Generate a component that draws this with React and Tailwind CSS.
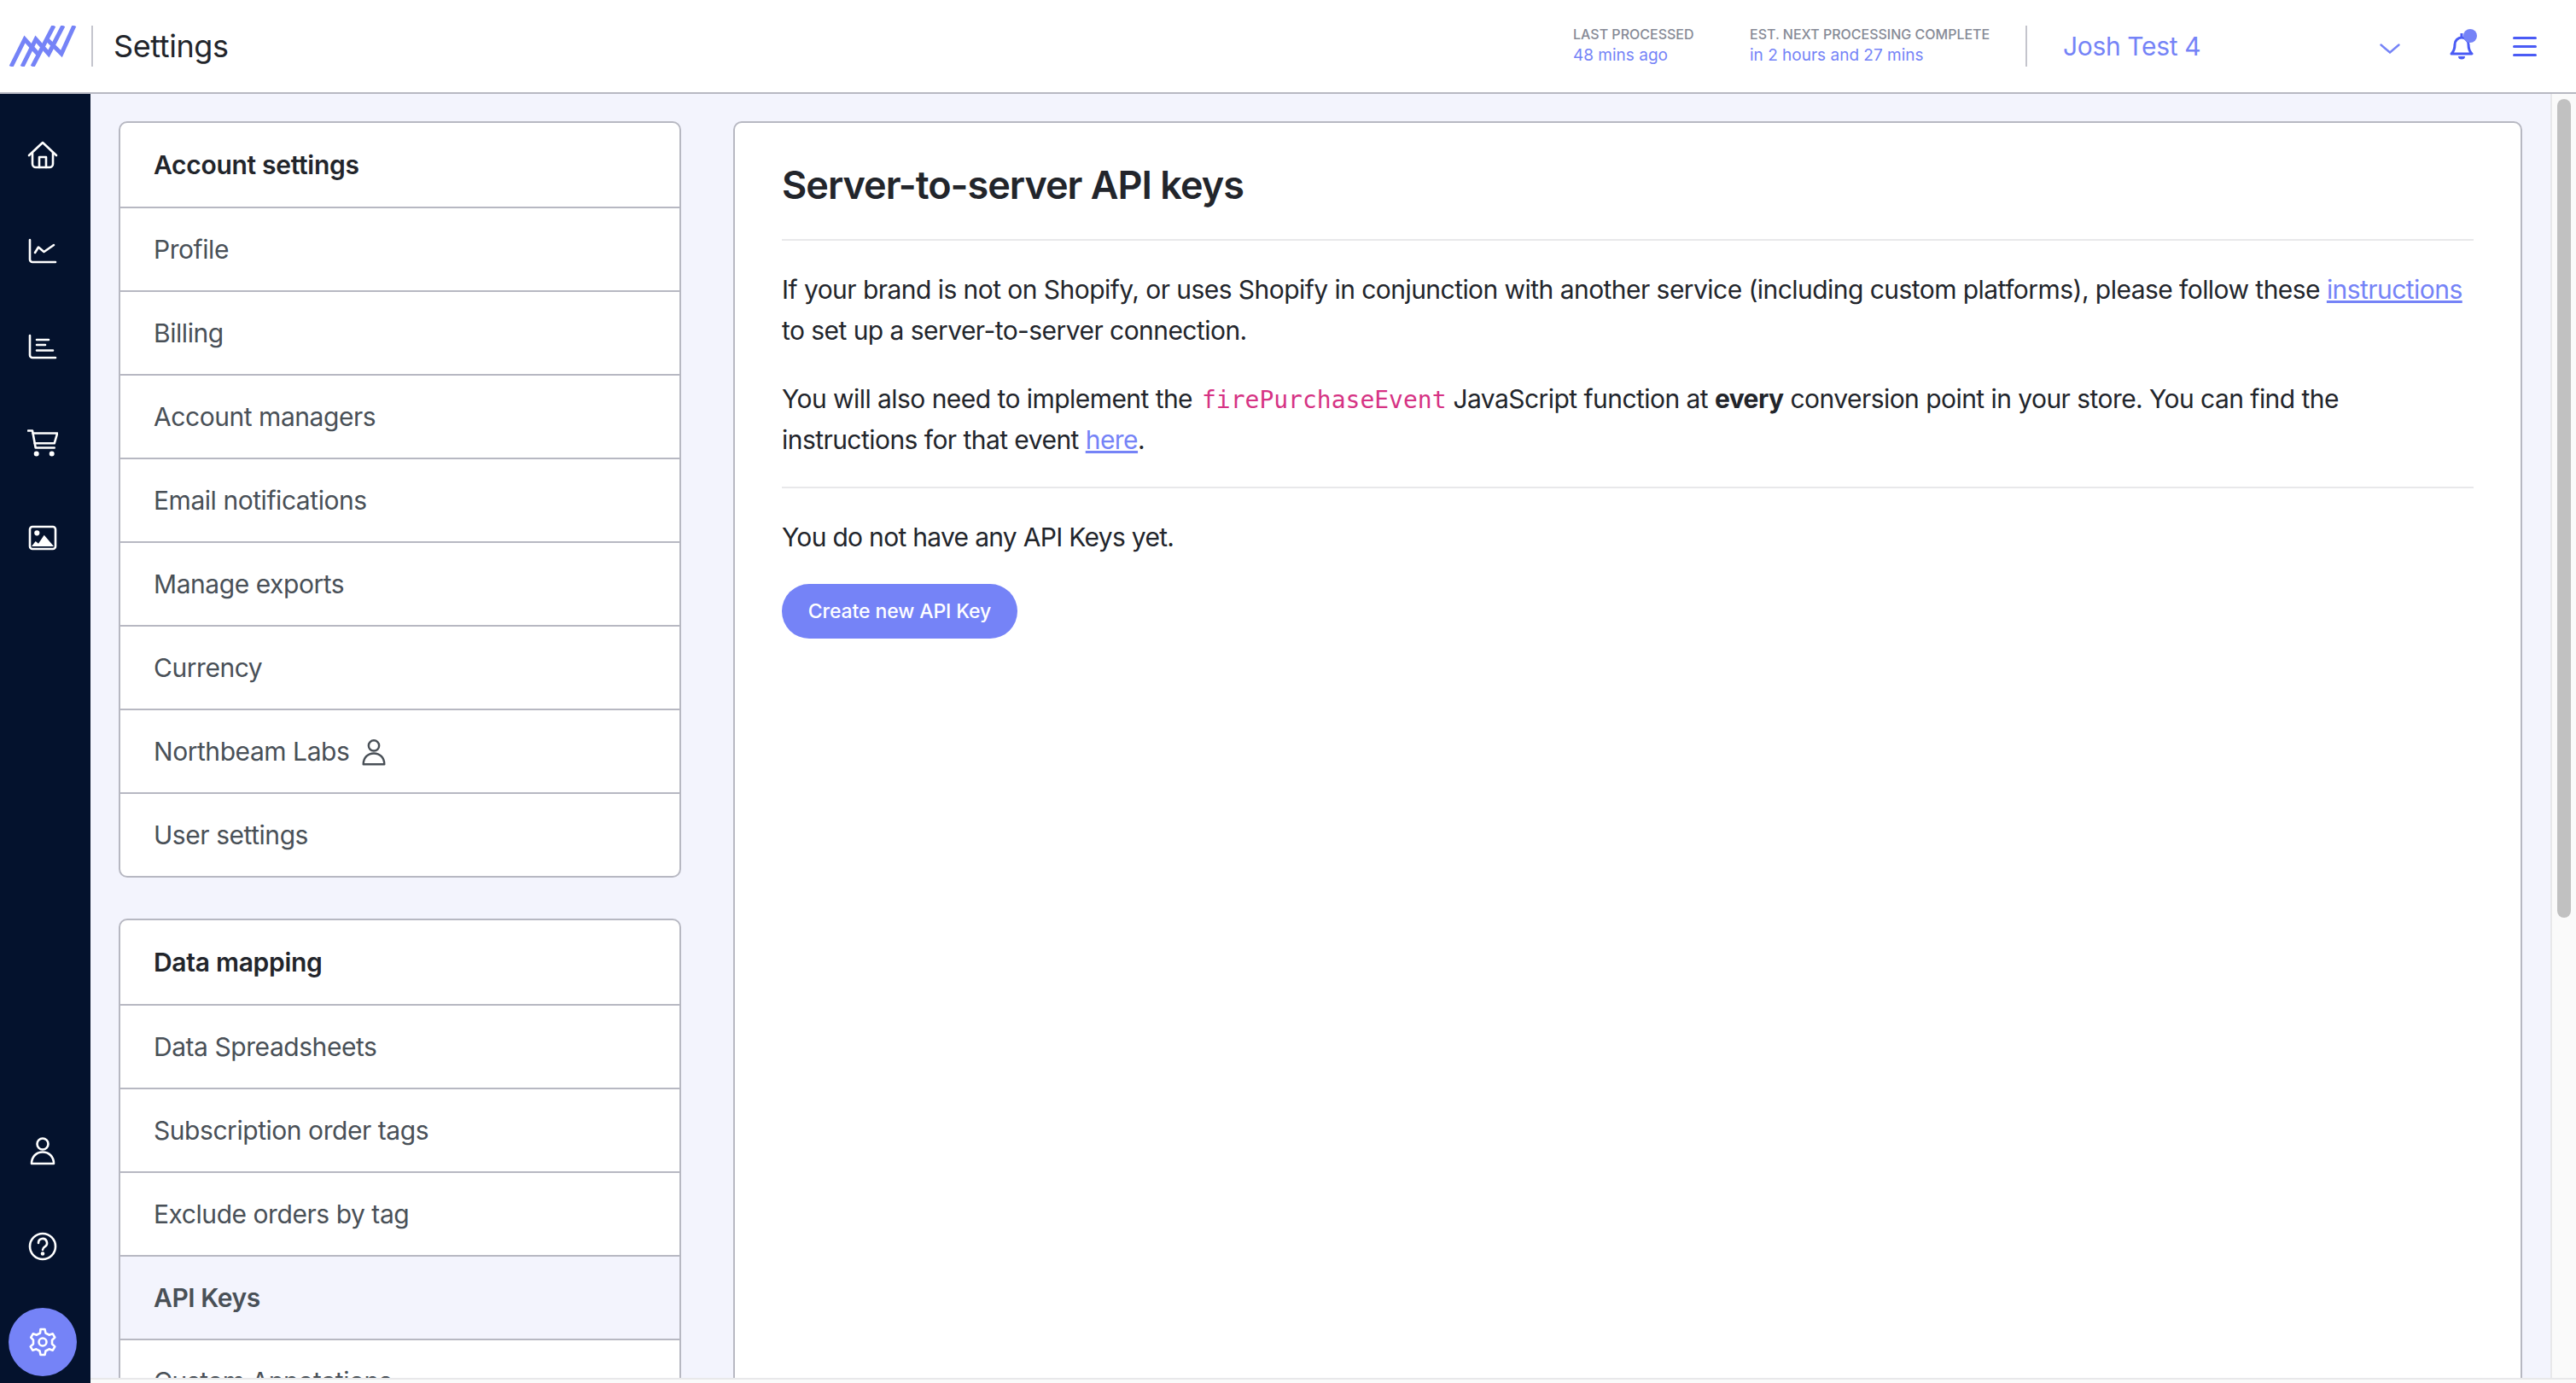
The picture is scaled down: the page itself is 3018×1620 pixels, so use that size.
import React from 'react';

const fontStack = 'font-[Inter,"Liberation_Sans",sans-serif]';

const accountLinks = ['Profile', 'Billing', 'Account managers', 'Email notifications', 'Manage exports', 'Currency', 'Northbeam Labs', 'User settings'];
const dataLinks = ['Data Spreadsheets', 'Subscription order tags', 'Exclude orders by tag', 'API Keys', 'Custom Annotations'];

const Icon = ({ children, className = 'w-[36px] h-[36px]' }) => (
  <svg viewBox="0 0 36 36" fill="none" stroke="currentColor" strokeWidth="2.6" strokeLinecap="round" strokeLinejoin="round" className={className}>
    {children}
  </svg>
);

const UserIcon = ({ className }) => (
  <Icon className={className}>
    <circle cx="18" cy="10" r="6.5" />
    <path d="M5 33c0-8 5.500-13.500 13-13.500S31 25 31 33Z" />
  </Icon>
);

const Logo = () => (
  <svg viewBox="0 0 80 48" className="w-[80px] h-[48px]" fill="none" stroke="#7583f7" strokeWidth="5">
    <path d="M3 48 L19 16 L36 35" />
    <path d="M16 48 L32 16 L47 33 L64 0" />
    <path d="M28 48 L53 0" />
    <path d="M45 16 L62 33 L77 0" />
  </svg>
);

const MenuCard = ({ title, links, active }) => (
  <div className="border-2 border-[#b7b8c2] rounded-[10px] bg-white overflow-hidden shrink-0">
    <div className="h-[100px] flex items-center px-[39px] border-b-2 border-[#b7b8c2] text-[30px] tracking-[-0.3px] font-semibold text-[#22252b]">{title}</div>
    {links.map((link, i) => (
      <div
        key={link}
        className={`flex items-center gap-[12px] px-[39px] pt-[1px] text-[30px] tracking-[-0.45px] ${i < links.length - 1 ? 'h-[98px] border-b-2 border-[#b7b8c2]' : 'h-[96px]'} ${link === active ? 'bg-[#f3f4fd] font-semibold text-[#495057]' : 'text-[#495057]'}`}
      >
        {link}
        {link === 'Northbeam Labs' && <UserIcon className="w-[34px] h-[34px]" />}
      </div>
    ))}
  </div>
);

export default function App() {
  return (
    <div className={`w-[3018px] h-[1620px] overflow-hidden flex flex-col bg-white ${fontStack}`}>
      {/* Top bar */}
      <header className="h-[110px] shrink-0 border-b-2 border-[#b7b8c2] flex items-center pl-[10px] pr-[46px]">
        <Logo />
        <div className="w-[2px] h-[48px] bg-[#c4c5cd] ml-[17px]" />
        <div className="ml-[24px] text-[36px] tracking-[-0.4px] text-[#22252b]">Settings</div>
        <div className="ml-auto flex items-center h-[48px]">
          <div className="w-[207px] -mt-[4px]">
            <div className="text-[16px] leading-[24px] font-medium text-[#868a96]">LAST PROCESSED</div>
            <div className="text-[19px] leading-[25px] text-[#7583f7]">48 mins ago</div>
          </div>
          <div className="w-[323px] -mt-[4px]">
            <div className="text-[16px] leading-[24px] font-medium text-[#868a96]">EST. NEXT PROCESSING COMPLETE</div>
            <div className="text-[19px] leading-[25px] text-[#7583f7]">in 2 hours and 27 mins</div>
          </div>
          <div className="w-[2px] h-[48px] bg-[#c4c5cd]" />
          <div className="w-[413px] pl-[42px] text-[30px] tracking-[-0.35px] text-[#7583f7]">Josh Test 4</div>
          <svg viewBox="0 0 24 12" className="w-[24px] h-[12px] mt-[6px] text-[#7583f7]" fill="none" stroke="currentColor" strokeWidth="2.4" strokeLinecap="round"><path d="M1.500 1.500 L12 10.500 L22.500 1.500" /></svg>
          <div className="relative ml-[58px] w-[28px] h-[32px] text-[#4a5bf5]">
            <svg viewBox="0 0 28 32" className="w-[28px] h-[32px]" fill="none" stroke="currentColor" strokeWidth="3" strokeLinejoin="round"><path d="M2 25c3-3 4-6 4-11a8 8 0 0 1 16 0c0 5 1 8 4 11Z" /><path d="M14 1v4" /><path d="M10 28h8a4 3.500 0 0 1-8 0Z" fill="currentColor" stroke="none" /></svg>
            <span className="absolute -top-[4px] right-[-4px] w-[16px] h-[16px] rounded-full bg-[#7583f7]" />
          </div>
          <div className="ml-[46px] w-[28px] flex flex-col gap-[7px]">
            <span className="h-[3px] bg-[#4a5bf5] rounded-full" />
            <span className="h-[3px] bg-[#4a5bf5] rounded-full" />
            <span className="h-[3px] bg-[#4a5bf5] rounded-full" />
          </div>
        </div>
      </header>

      <div className="flex-1 flex min-h-0">
        {/* Icon rail */}
        <aside className="w-[106px] shrink-0 bg-[#04122d] flex flex-col items-center text-white pt-[54px] pb-[8px] pr-[6px]">
          <div className="flex flex-col items-center gap-[76px]">
            <Icon><path d="M2 18 18 3l16 15" /><path d="M6 15v13a4 4 0 0 0 4 4h16a4 4 0 0 0 4-4V15" /><path d="M14 32V20h8v12" /></Icon>
            <Icon><path d="M3 5v23a3 3 0 0 0 3 3h27" /><path d="M9 20l4-6.500 6.500 5.500L31 11" /></Icon>
            <Icon><path d="M3 5v23a3 3 0 0 0 3 3h27" /><path d="M11 10h14M11 16h10M11 22.500h19" /></Icon>
            <Icon><path d="M1 4.500h5l3.700 20h22" /><path d="M6.500 7.500h28.700l-3.500 11.800H8.700" /><circle cx="10.700" cy="31.500" r="1.700" fill="currentColor" /><circle cx="28.700" cy="31.500" r="1.700" fill="currentColor" /></Icon>
            <Icon><rect x="3" y="5" width="30" height="26" rx="3" /><circle cx="11.300" cy="12.300" r="1.800" fill="currentColor" /><path d="M5 28l4.700-6 3.300 2.700 6.700-10L31 28Z" fill="currentColor" stroke="none" /></Icon>
          </div>
          <div className="mt-auto flex flex-col items-center">
            <UserIcon />
            <div className="mt-[76px]">
              <Icon><circle cx="18" cy="18" r="15" /><path d="M13 14a5 5 0 1 1 7.500 4.300c-1.600 1-2.500 1.800-2.500 3.700" /><circle cx="18" cy="26.500" r="1" fill="currentColor" /></Icon>
            </div>
            <div className="mt-[54px] w-[80px] h-[80px] rounded-full bg-[#7583f7] flex items-center justify-center">
              <Icon><path d="M15.500 3h5l1 4.500 4 2.200 4.300-1.400 2.500 4.300-3.300 3.100v4.600l3.300 3.100-2.500 4.300-4.300-1.400-4 2.200-1 4.500h-5l-1-4.500-4-2.200-4.300 1.400-2.500-4.300 3.300-3.100v-4.600L4.200 12.600l2.500-4.300 4.300 1.400 4-2.200Z" /><circle cx="18" cy="18" r="4.500" /></Icon>
            </div>
          </div>
        </aside>

        <div className="flex-1 flex flex-col min-w-0">
          <div className="flex-1 flex min-h-0">
            <main className="flex-1 min-w-0 bg-[#f3f4fd] border-r-2 border-[#e8e8ea] flex gap-[61px] pt-[32px] pl-[33px] pr-[33px] overflow-hidden">
              <nav className="w-[659px] shrink-0 flex flex-col gap-[48px]">
                <MenuCard title="Account settings" links={accountLinks} />
                <MenuCard title="Data mapping" links={dataLinks} active="API Keys" />
              </nav>

              <section className="flex-1 min-w-0 h-[1600px] border-2 border-[#b7b8c2] rounded-[10px] bg-white px-[55px] text-[30px] tracking-[-0.55px] leading-[48px] text-[#22252b]">
                <h1 className="text-[45px] tracking-[-1px] leading-[60px] font-semibold mt-[43px] pb-[33px] border-b-2 border-[#e8e8ea]">Server-to-server API keys</h1>
                <p className="mt-[33px]">
                  If your brand is not on Shopify, or uses Shopify in conjunction with another service (including custom platforms), please follow these{' '}
                  <span className="text-[#7583f7] underline">instructions</span> to set up a server-to-server connection.
                </p>
                <p className="mt-[32px]">
                  You will also need to implement the{' '}
                  <code className="font-['DejaVu_Sans_Mono',monospace] text-[28px] tracking-normal leading-none ml-[3px] text-[#d63384]">firePurchaseEvent</code> JavaScript function at <b className="font-bold">every</b> conversion point in your store. You can find the instructions for that event{' '}
                  <span className="text-[#7583f7] underline">here</span>.
                </p>
                <div className="mt-[31px] border-t-2 border-[#e8e8ea]" />
                <p className="mt-[33px] tracking-[-0.7px]">You do not have any API Keys yet.</p>
                <button className="mt-[31px] h-[64px] w-[276px] rounded-full bg-[#7583f7] text-white text-[23px] tracking-[-0.1px] font-medium">Create new API Key</button>
              </section>
            </main>
            {/* Scrollbar */}
            <div className="w-[28px] shrink-0 bg-[#fafafa] pt-[6px] pl-[6px]">
              <div className="w-[16px] h-[959px] rounded-full bg-[#c1c1c1]" />
            </div>
          </div>
          <div className="h-[6px] shrink-0 bg-[#fafafa] border-t-2 border-[#e8e8ea]" />
        </div>
      </div>
    </div>
  );
}
